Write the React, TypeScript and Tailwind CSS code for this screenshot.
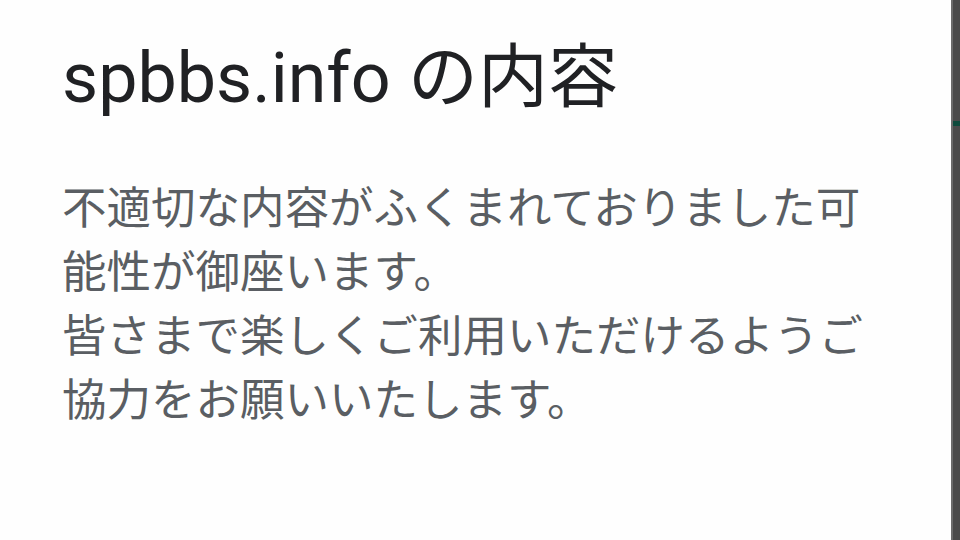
export default function App() {
    return (
        <div className="flex h-[540px] w-[960px] overflow-hidden bg-[#fefefe]">
            {/* ── Dialog content ── */}
            <main className="flex-1 pl-[62px] pt-[32px]">
                <h1
                    className="text-[70px] leading-[92px] text-[#202124]"
                    style={{ fontFamily: 'Roboto, "Noto Sans CJK JP", sans-serif' }}
                >
                    spbbs.info の内容
                </h1>
                <div
                    className="mt-[49px] w-[820px] text-[44.5px] leading-[64px] text-[#5a5e63]"
                    style={{ fontFamily: '"Noto Sans CJK JP", sans-serif' }}
                >
                    <p>不適切な内容がふくまれておりました可能性が御座います。</p>
                    <p>皆さまで楽しくご利用いただけるようご協力をお願いいたします。</p>
                </div>
            </main>

            {/* ── Right edge strip ── */}
            <aside className="flex w-[9px] flex-col border-l-2 border-[#6b6b6b] bg-[#4a4a4a]">
                <div className="h-[121px]" />
                <div className="h-[5px] bg-[#0d4a3c]" />
            </aside>
        </div>
    );
}
